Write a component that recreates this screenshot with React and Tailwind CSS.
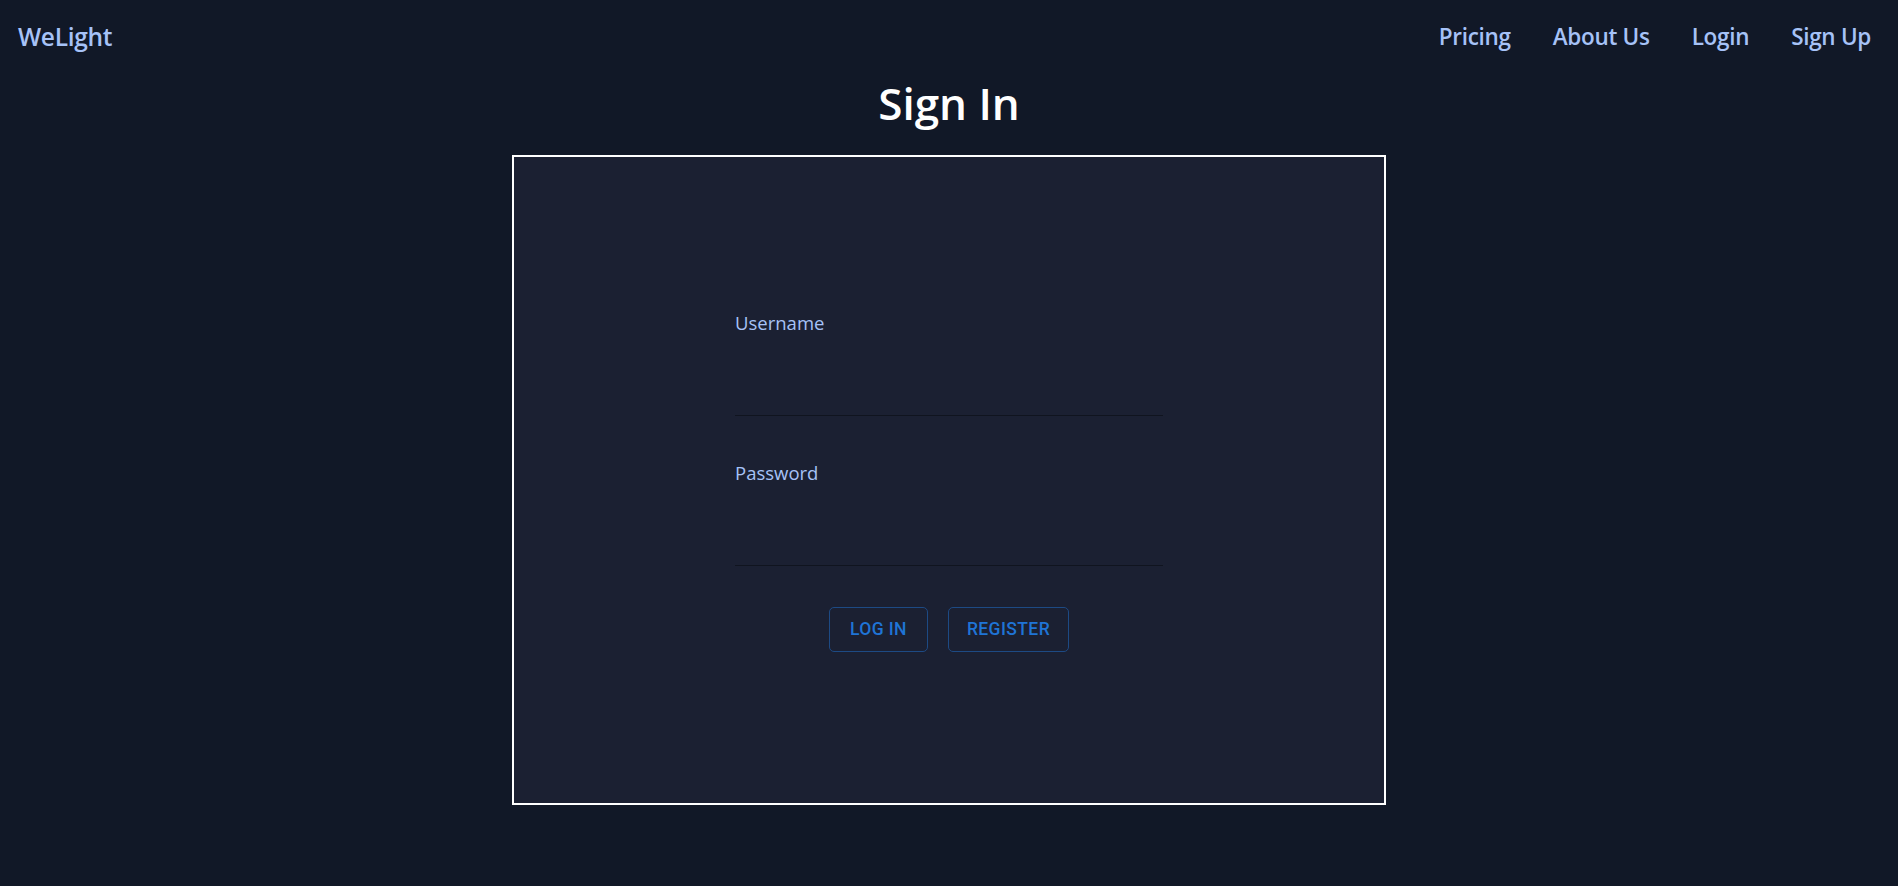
import React from 'react';

const navLinks = ['Pricing', 'About Us', 'Login', 'Sign Up'];

const Field = ({ label, type = 'text' }) => (
  <div className="flex flex-col">
    <label className="text-[18.5px] leading-[26px] text-[#a6c2f7]">{label}</label>
    <input
      type={type}
      className="mt-[54px] h-[26px] w-full border-b border-[#10141f] bg-transparent text-[19px] text-[#dbe4ff] outline-none"
    />
  </div>
);

const App = () => {
  return (
    <div
      className="min-h-screen bg-[#111827]"
      style={{ fontFamily: '"Open Sans", "Noto Sans", sans-serif' }}
    >
      {/* top bar */}
      <nav className="flex h-[73px] items-center justify-between pl-[18px] pr-[27px] pt-[1px]">
        <a className="text-[24.5px] font-semibold tracking-[-0.3px] text-[#a6c2f7]">WeLight</a>
        <div className="flex items-center gap-[42px]">
          {navLinks.map((link) => (
            <a key={link} className="text-[22.5px] font-semibold tracking-[-0.3px] text-[#a6c2f7]">
              {link}
            </a>
          ))}
        </div>
      </nav>

      <h1 className="mt-[4px] text-center text-[44px] font-semibold leading-[52px] text-white">
        Sign In
      </h1>

      {/* card */}
      <div className="mx-auto mt-[26px] flex h-[650px] w-[874px] items-center justify-center border-2 border-white bg-[#1b2032]">
        <form className="mt-[2px] flex w-[428px] flex-col gap-[44px]" onSubmit={(e) => e.preventDefault()}>
          <Field label="Username" />
          <Field label="Password" type="password" />
          <div
            className="-mt-[3px] flex justify-center gap-[20px]"
            style={{ fontFamily: 'Roboto, "Liberation Sans", sans-serif' }}
          >
            <button
              type="submit"
              className="h-[45px] rounded-[5px] border border-[#1d4a84] px-[20px] text-[17.5px] font-medium uppercase tracking-[0.4px] text-[#1f74d6]"
            >
              Log In
            </button>
            <button
              type="button"
              className="h-[45px] rounded-[5px] border border-[#1d4a84] px-[18px] text-[17.5px] font-medium uppercase tracking-[0.4px] text-[#1f74d6]"
            >
              Register
            </button>
          </div>
        </form>
      </div>
    </div>
  );
};

export default App;
